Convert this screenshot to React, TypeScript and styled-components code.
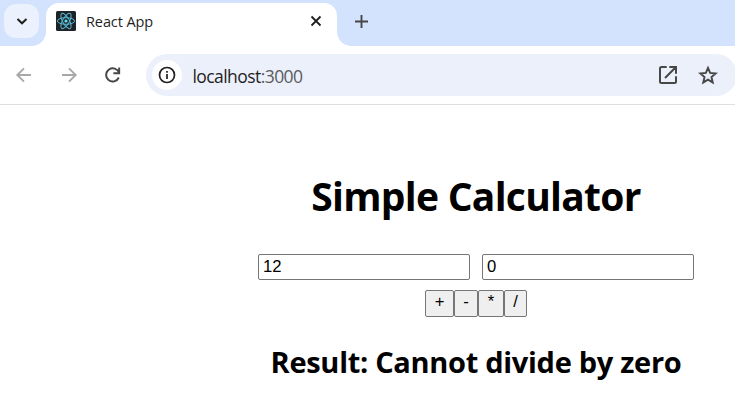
import React from "react";
import styled, { createGlobalStyle } from "styled-components";

const GlobalStyle = createGlobalStyle`
  * { box-sizing: border-box; }
  body { margin: 0; background: #fff; overflow: hidden; }
`;

const Window = styled.div`
  width: 735px;
  height: 407px;
  overflow: hidden;
  background: #fff;
  font-family: "Open Sans", "Noto Sans", sans-serif;
`;

const TabStrip = styled.div`
  display: flex;
  height: 46px;
  padding: 3px 0 0 4px;
  background: #d3e3fd;
`;

const TabSearch = styled.button`
  display: grid;
  place-items: center;
  width: 35px;
  height: 34px;
  margin: 1px 7px 0 0;
  padding: 0;
  border: 0;
  border-radius: 12px;
  background: #ebf1fd;
`;

const Tab = styled.div`
  position: relative;
  display: flex;
  align-items: center;
  width: 291px;
  height: 43px;
  padding: 0 13px 7px 10px;
  border-radius: 13px 13px 0 0;
  background: #fff;

  &::before,
  &::after {
    content: "";
    position: absolute;
    bottom: 0;
    width: 14px;
    height: 14px;
  }
  &::before {
    left: -14px;
    background: radial-gradient(circle at 0 0, transparent 13.5px, #fff 14.2px);
  }
  &::after {
    right: -14px;
    background: radial-gradient(circle at 100% 0, transparent 13.5px, #fff 14.2px);
  }
`;

const TabTitle = styled.span`
  flex: 1;
  margin-left: 10px;
  padding-top: 1px;
  font: 14.5px/20px "Open Sans", sans-serif;
  letter-spacing: -0.1px;
  color: #1f1f1f;
`;

const NewTab = styled.div`
  margin: 11px 0 0 17px;
  width: 15px;
  height: 15px;
`;

const Toolbar = styled.div`
  display: flex;
  align-items: center;
  height: 59px;
  padding-left: 14px;
  border-bottom: 1px solid #dedfe1;
  background: #fff;
`;

const NavIcons = styled.div`
  display: flex;
  gap: 24.5px;
  width: 132px;
  flex: none;
`;

const AddressBar = styled.div`
  display: flex;
  align-items: center;
  flex: none;
  width: 591px;
  height: 42px;
  padding: 0 19px 0 6px;
  border-radius: 21px;
  background: #ecf0fa;
`;

const SiteInfo = styled.div`
  display: grid;
  place-items: center;
  width: 30px;
  height: 30px;
  border-radius: 50%;
  background: #fff;
`;

const Address = styled.span`
  flex: 1;
  margin-left: 10.5px;
  padding-top: 1px;
  font: 17.5px/24px "Open Sans", sans-serif;
  letter-spacing: -0.57px;
  color: #1f1f1f;
`;

const Port = styled.span`
  color: #5b5c60;
`;

const AddressActions = styled.div`
  display: flex;
  gap: 20px;
`;

const Icon = styled.svg`
  display: block;
  flex: none;
`;

const Calculator = styled.main`
  display: flex;
  flex-direction: column;
  align-items: center;
  width: 436px;
  margin: 64px 0 0 258px;
`;

const Title = styled.h1`
  margin: 0 0 31px;
  font-size: 39px;
  font-weight: 700;
  line-height: 54px;
  letter-spacing: -0.72px;
  white-space: nowrap;
  color: #000;
`;

const Fields = styled.div`
  display: flex;
  gap: 12px;
  margin-bottom: 10px;
`;

const NumberField = styled.input`
  width: 212px;
  height: 26px;
  padding: 0 4px 1px;
  border: 1px solid #767676;
  border-radius: 2px;
  background: #fff;
  font: 16.67px "Liberation Sans", Arial, sans-serif;
  color: #000;
  outline: 0;
`;

const Operators = styled.div`
  display: flex;
`;

const Operator = styled.button<{ $width: number }>`
  width: ${({ $width }) => $width}px;
  height: 27px;
  padding: 0 0 3px;
  border: 1px solid #767676;
  border-radius: 2px;
  background: #efefef;
  font: 16.67px "Liberation Sans", Arial, sans-serif;
  color: #000;
`;

const Result = styled.h2`
  margin: 25px 0 0;
  font-size: 29px;
  font-weight: 700;
  line-height: 40px;
  letter-spacing: -0.3px;
  white-space: nowrap;
  color: #000;
`;

const operators = [
  { sign: "+", width: 29 },
  { sign: "-", width: 24 },
  { sign: "*", width: 26 },
  { sign: "/", width: 23 },
];

const ReactLogo = () => (
  <Icon width="20" height="20" viewBox="0 0 20 20" fill="none">
    <rect width="20" height="20" rx="1.5" fill="#202326" />
    <g stroke="#55b8d4" strokeWidth="1">
      <ellipse cx="10" cy="10" rx="8.6" ry="3.3" />
      <ellipse cx="10" cy="10" rx="8.6" ry="3.3" transform="rotate(60 10 10)" />
      <ellipse cx="10" cy="10" rx="8.6" ry="3.3" transform="rotate(120 10 10)" />
    </g>
    <circle cx="10" cy="10" r="1.6" fill="#61dafb" />
  </Icon>
);

export default function App() {
  const [left, setLeft] = React.useState("12");
  const [right, setRight] = React.useState("0");

  return (
    <Window>
      <GlobalStyle />
      <TabStrip>
        <TabSearch aria-label="Search tabs">
          <Icon width="12" height="12" viewBox="0 0 12 12" fill="none" stroke="#1f1f1f" strokeWidth="2">
            <path d="M1.5 4 6 8.3 10.5 4" />
          </Icon>
        </TabSearch>
        <Tab>
          <ReactLogo />
          <TabTitle>React App</TabTitle>
          <Icon width="16" height="16" viewBox="0 0 16 16" stroke="#1f1f1f" strokeWidth="1.8">
            <path d="m3.5 3.5 9 9m0-9-9 9" />
          </Icon>
        </Tab>
        <NewTab>
          <Icon width="15" height="15" viewBox="0 0 15 15" stroke="#474747" strokeWidth="1.9">
            <path d="M7.5 1v13M1 7.5h13" />
          </Icon>
        </NewTab>
      </TabStrip>
      <Toolbar>
        <NavIcons>
          <Icon width="20" height="20" viewBox="0 0 20 20" fill="none" stroke="#a8a8a8" strokeWidth="1.9">
            <path d="M17 10H3.5M10 3.3 3.3 10 10 16.7" />
          </Icon>
          <Icon width="20" height="20" viewBox="0 0 20 20" fill="none" stroke="#a8a8a8" strokeWidth="1.9">
            <path d="M3 10h13.5M10 3.3 16.7 10 10 16.7" />
          </Icon>
          <Icon width="20" height="20" viewBox="0 0 20 20" fill="none" stroke="#474747" strokeWidth="1.9">
            <path d="M16 7.8A6.6 6.6 0 1 0 15.8 12.5M16.2 2.5v5.7h-5.8" />
          </Icon>
        </NavIcons>
        <AddressBar>
          <SiteInfo>
            <Icon width="18" height="18" viewBox="0 0 18 18" fill="none" stroke="#1f1f1f" strokeWidth="1.7">
              <circle cx="9" cy="9" r="7.5" />
              <path d="M9 8v5M9 5v1.7" />
            </Icon>
          </SiteInfo>
          <Address>
            localhost<Port>:3000</Port>
          </Address>
          <AddressActions>
            <Icon width="20" height="20" viewBox="0 0 20 20" fill="none" stroke="#474747" strokeWidth="2">
              <path d="M8.7 2H3.5Q2 2 2 3.5V16.5Q2 18 3.5 18H16.5Q18 18 18 16.5V11.3M11.3 2H18V8.7M18 2 7 13" />
            </Icon>
            <Icon width="20" height="20" viewBox="0 0 20 20" fill="none" stroke="#474747" strokeWidth="1.9">
              <path d="m10 2.9 2.15 5.05 5.5.48-4.17 3.63 1.25 5.37L10 14.58l-4.73 2.85 1.25-5.37-4.17-3.63 5.5-.48z" />
            </Icon>
          </AddressActions>
        </AddressBar>
      </Toolbar>
      <Calculator>
        <Title>Simple Calculator</Title>
        <Fields>
          <NumberField aria-label="First number" value={left} onChange={(e) => setLeft(e.target.value)} />
          <NumberField aria-label="Second number" value={right} onChange={(e) => setRight(e.target.value)} />
        </Fields>
        <Operators>
          {operators.map(({ sign, width }) => (
            <Operator key={sign} $width={width}>
              {sign}
            </Operator>
          ))}
        </Operators>
        <Result>Result: Cannot divide by zero</Result>
      </Calculator>
    </Window>
  );
}
